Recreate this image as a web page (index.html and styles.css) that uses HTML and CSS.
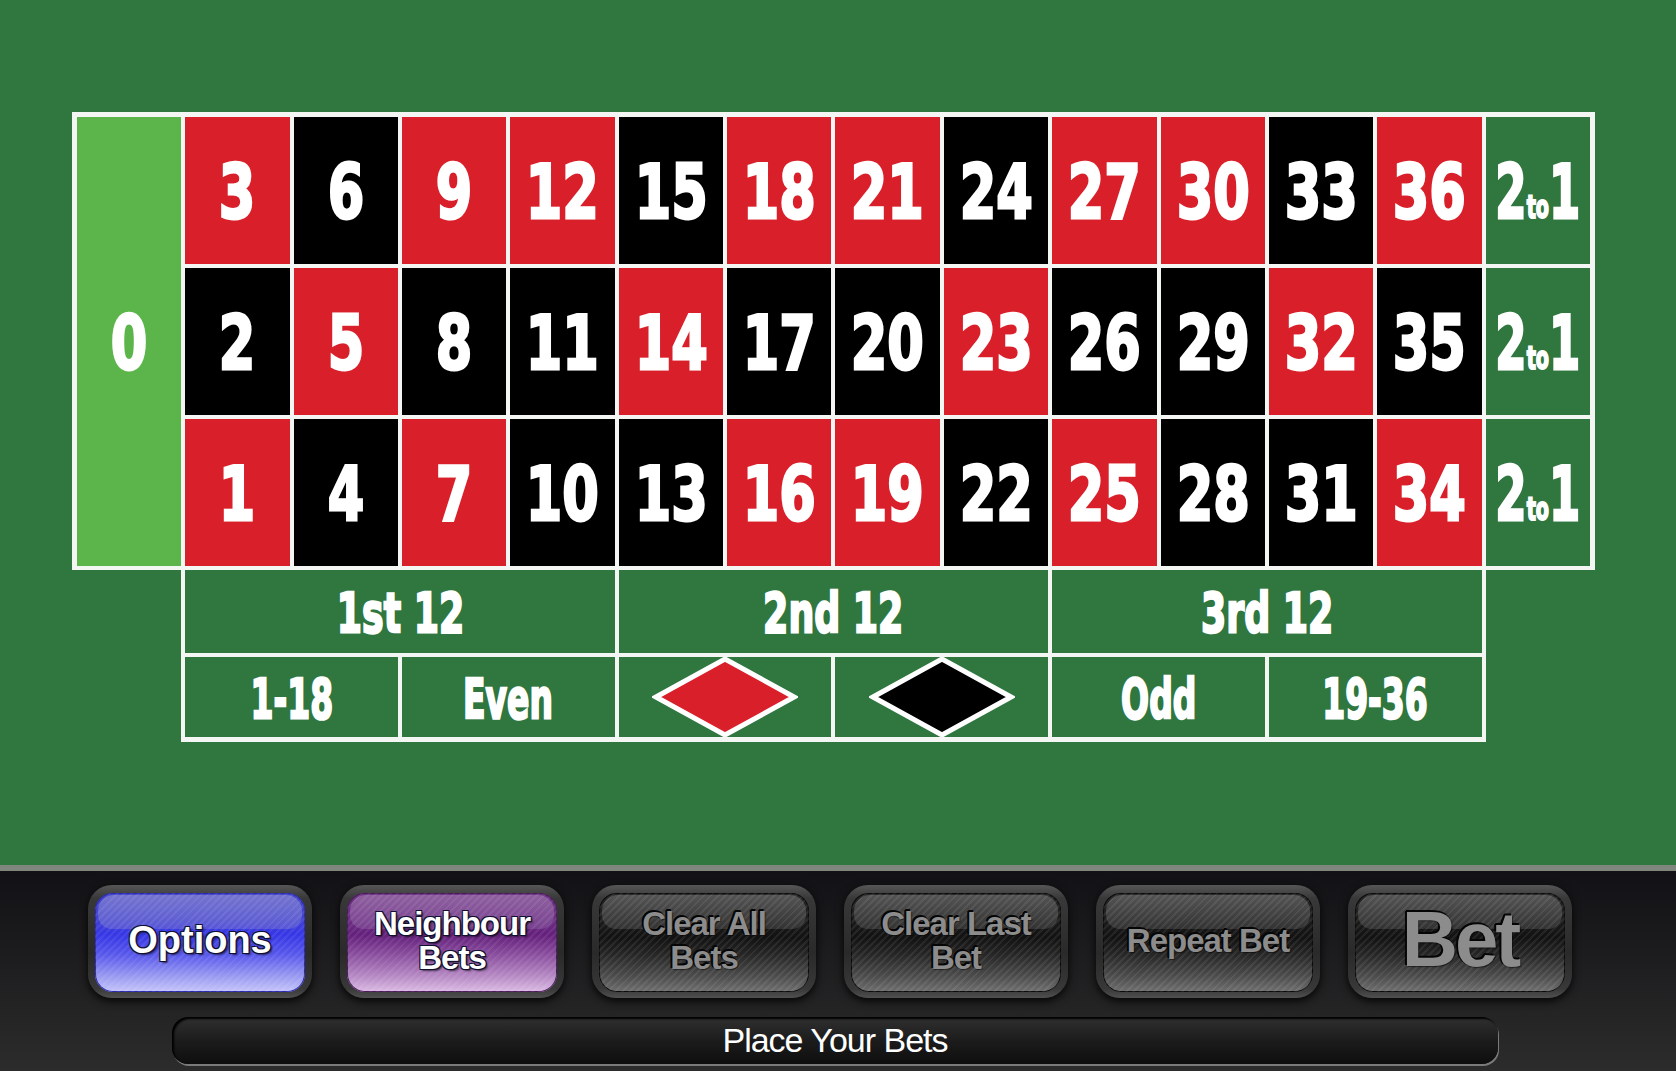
FILE: index.html
```html
<!DOCTYPE html>
<html lang="en">
<head>
<meta charset="utf-8">
<title>Roulette</title>
<link rel="stylesheet" href="styles.css">
</head>
<body>
<div class="felt">
  <div class="board">
    <div class="cell zero num"><span>0</span></div>
    <div class="cell num red"><span>3</span></div>
    <div class="cell num black"><span>6</span></div>
    <div class="cell num red"><span>9</span></div>
    <div class="cell num red"><span>12</span></div>
    <div class="cell num black"><span>15</span></div>
    <div class="cell num red"><span>18</span></div>
    <div class="cell num red"><span>21</span></div>
    <div class="cell num black"><span>24</span></div>
    <div class="cell num red"><span>27</span></div>
    <div class="cell num red"><span>30</span></div>
    <div class="cell num black"><span>33</span></div>
    <div class="cell num red"><span>36</span></div>
    <div class="cell num col"><span>2<small>to</small>1</span></div>

    <div class="cell num black"><span>2</span></div>
    <div class="cell num red"><span>5</span></div>
    <div class="cell num black"><span>8</span></div>
    <div class="cell num black"><span>11</span></div>
    <div class="cell num red"><span>14</span></div>
    <div class="cell num black"><span>17</span></div>
    <div class="cell num black"><span>20</span></div>
    <div class="cell num red"><span>23</span></div>
    <div class="cell num black"><span>26</span></div>
    <div class="cell num black"><span>29</span></div>
    <div class="cell num red"><span>32</span></div>
    <div class="cell num black"><span>35</span></div>
    <div class="cell num col"><span>2<small>to</small>1</span></div>

    <div class="cell num red"><span>1</span></div>
    <div class="cell num black"><span>4</span></div>
    <div class="cell num red"><span>7</span></div>
    <div class="cell num black"><span>10</span></div>
    <div class="cell num black"><span>13</span></div>
    <div class="cell num red"><span>16</span></div>
    <div class="cell num red"><span>19</span></div>
    <div class="cell num black"><span>22</span></div>
    <div class="cell num red"><span>25</span></div>
    <div class="cell num black"><span>28</span></div>
    <div class="cell num black"><span>31</span></div>
    <div class="cell num red"><span>34</span></div>
    <div class="cell num col"><span>2<small>to</small>1</span></div>

    <div class="fill-l"></div>
    <div class="fill-r"></div>

    <div class="cell out dozen"><span>1st 12</span></div>
    <div class="cell out dozen"><span>2nd 12</span></div>
    <div class="cell out dozen"><span>3rd 12</span></div>

    <div class="cell out even"><span>1-18</span></div>
    <div class="cell out even"><span>Even</span></div>
    <div class="cell out even">
      <svg class="diamond" width="146" height="82" viewBox="0 0 146 82"><polygon points="73,3 142,41 73,79 4,41" fill="#d9202a" stroke="#fff" stroke-width="5" stroke-linejoin="miter"/></svg>
    </div>
    <div class="cell out even">
      <svg class="diamond" width="146" height="82" viewBox="0 0 146 82"><polygon points="73,3 142,41 73,79 4,41" fill="#000" stroke="#fff" stroke-width="5" stroke-linejoin="miter"/></svg>
    </div>
    <div class="cell out even"><span>Odd</span></div>
    <div class="cell out even"><span>19-36</span></div>
  </div>
</div>

<div class="console">
  <div class="buttons">
    <div class="btn"><div class="face blue"><span class="label big1">Options</span></div></div>
    <div class="btn"><div class="face purple"><span class="label two">Neighbour<br>Bets</span></div></div>
    <div class="btn"><div class="face grey"><span class="label two dim">Clear All<br>Bets</span></div></div>
    <div class="btn"><div class="face grey"><span class="label two dim">Clear Last<br>Bet</span></div></div>
    <div class="btn"><div class="face grey"><span class="label one dim">Repeat Bet</span></div></div>
    <div class="btn"><div class="face grey"><span class="label huge dim">Bet</span></div></div>
  </div>
  <div class="status">Place Your Bets</div>
</div>
</body>
</html>
```

FILE: styles.css
```css
html, body {
  margin: 0;
  padding: 0;
}

body {
  width: 1676px;
  height: 1071px;
  overflow: hidden;
  background: #2f763f;
  font-family: "Liberation Sans", Arial, sans-serif;
}

.felt {
  height: 865px;
  box-sizing: border-box;
  padding: 112px 0 0 72px;
}

.board {
  display: grid;
  width: 1523px;
  height: 630px;
  box-sizing: border-box;
  padding: 5px;
  gap: 4px;
  background: #f3f6f2;
  grid-template-columns: repeat(14, 1fr);
  grid-template-rows: 147px 147px 147px 83px 80px;
}

.cell {
  display: flex;
  align-items: center;
  justify-content: center;
  color: #fff;
  font-family: "DejaVu Sans", sans-serif;
  font-weight: bold;
  overflow: hidden;
  min-width: 0;
}

.num {
  font-size: 75px;
  line-height: 1;
}

.num span {
  display: inline-block;
  transform: scaleX(0.7);
  -webkit-text-stroke: 3px #fff;
  white-space: nowrap;
  margin-top: 4px;
}

.num small {
  font-size: 32px;
  -webkit-text-stroke: 2px #fff;
}

.col span {
  transform: scaleX(0.6);
}

.red { background: #d9202a; }
.black { background: #000; }
.col { background: #2f763f; }

.zero {
  grid-row: 1 / 4;
  background: #5cb54b;
}

.out {
  background: #2f763f;
  font-size: 55px;
  line-height: 1;
}

.out span {
  display: inline-block;
  white-space: nowrap;
  -webkit-text-stroke: 2.5px #fff;
  transform: scaleX(0.6);
  margin-top: 4px;
}

.dozen {
  grid-column: span 4;
}

.dozen span {
  transform: scaleX(0.66);
}

.even {
  grid-column: span 2;
}

.fill-l {
  grid-column: 1;
  grid-row: 4 / 6;
  margin: 0 0 -5px -5px;
  background: #2f763f;
}

.fill-r {
  grid-column: 14;
  grid-row: 4 / 6;
  margin: 0 -5px -5px 0;
  background: #2f763f;
}

.diamond {
  display: block;
}

/* bottom console */
.console {
  height: 206px;
  box-sizing: border-box;
  border-top: 6px solid #7e867e;
  background: linear-gradient(#121216, #1c1c1e 40%, #2c2c2c);
  padding-top: 14px;
}

.buttons {
  display: flex;
  gap: 28px;
  padding-left: 88px;
}

.btn {
  width: 224px;
  height: 113px;
  box-sizing: border-box;
  padding: 8px 7px 6px;
  border-radius: 24px;
  background: linear-gradient(#565656, #383838 12%, #2a2a2a 60%, #383838 92%, #505050);
  box-shadow: 0 3px 8px rgba(0, 0, 0, 0.9);
}

.face {
  position: relative;
  height: 100%;
  border-radius: 18px;
  display: flex;
  align-items: center;
  justify-content: center;
  text-align: center;
  font-weight: bold;
  overflow: hidden;
}

.face::before {
  content: "";
  position: absolute;
  left: 3px;
  right: 3px;
  top: 2px;
  height: 34%;
  border-radius: 16px 16px 14px 14px;
  background: rgba(255, 255, 255, 0.16);
}

.face::after {
  content: "";
  position: absolute;
  left: 0;
  right: 0;
  top: 0;
  bottom: 0;
  background: repeating-linear-gradient(135deg, rgba(255, 255, 255, 0.07) 0 2px, rgba(0, 0, 0, 0) 2px 5px);
}

.blue {
  background: linear-gradient(#4848c8 0%, #3f3fd6 30%, #3636e6 42%, #5858ec 62%, #9c9cf2 85%, #c6c6fa 100%);
  box-shadow: inset 0 0 0 1px #2a2ab0;
}

.blue::before {
  background: linear-gradient(rgba(170, 170, 215, 0.45), rgba(150, 150, 205, 0.3));
}

.purple {
  background: linear-gradient(#6e3684 0%, #6a2c82 30%, #64207c 42%, #8a4e9e 62%, #b88cc6 85%, #dcbce4 100%);
  box-shadow: inset 0 0 0 1px #4a1a5a;
}

.purple::before {
  background: linear-gradient(rgba(190, 160, 200, 0.4), rgba(170, 140, 190, 0.25));
}

.grey {
  background: linear-gradient(#2a2a2a 0%, #1a1a1a 30%, #121212 45%, #262626 62%, #4e4e4e 85%, #707070 100%);
  box-shadow: inset 0 0 0 1px #0c0c0c;
}

.grey::before {
  background: linear-gradient(rgba(255, 255, 255, 0.2), rgba(255, 255, 255, 0.12));
}

.label {
  position: relative;
  z-index: 1;
  color: #fff;
  text-shadow: -1px -1px 0 #101030, 1px 1px 0 #101030, -1px 1px 0 #101030, 1px -1px 0 #101030, 2px 2px 2px rgba(0, 0, 0, 0.6);
}

.big1 {
  font-size: 38px;
  margin-top: -4px;
}

.two {
  font-size: 33px;
  line-height: 34px;
  letter-spacing: -1px;
  margin-top: -4px;
}

.one {
  font-size: 33px;
  letter-spacing: -1px;
  margin-top: -4px;
}

.huge {
  font-size: 78px;
  letter-spacing: -3px;
  margin-top: -6px;
}

.dim {
  color: #8c8c8c;
  text-shadow: -2px -1px 0 #050505, -1px -2px 0 #050505, 1px 1px 1px rgba(0, 0, 0, 0.5);
}

.status {
  margin: 19px 0 0 172px;
  width: 1326px;
  height: 47px;
  border-radius: 16px;
  background: linear-gradient(#303030, #1c1c1c 50%, #0e0e0e);
  box-shadow: inset 2px 2px 2px #000, 1px 2px 0 #7a7a7a;
  display: flex;
  align-items: center;
  justify-content: center;
  color: #fff;
  font-size: 34px;
  letter-spacing: -1px;
}
```
